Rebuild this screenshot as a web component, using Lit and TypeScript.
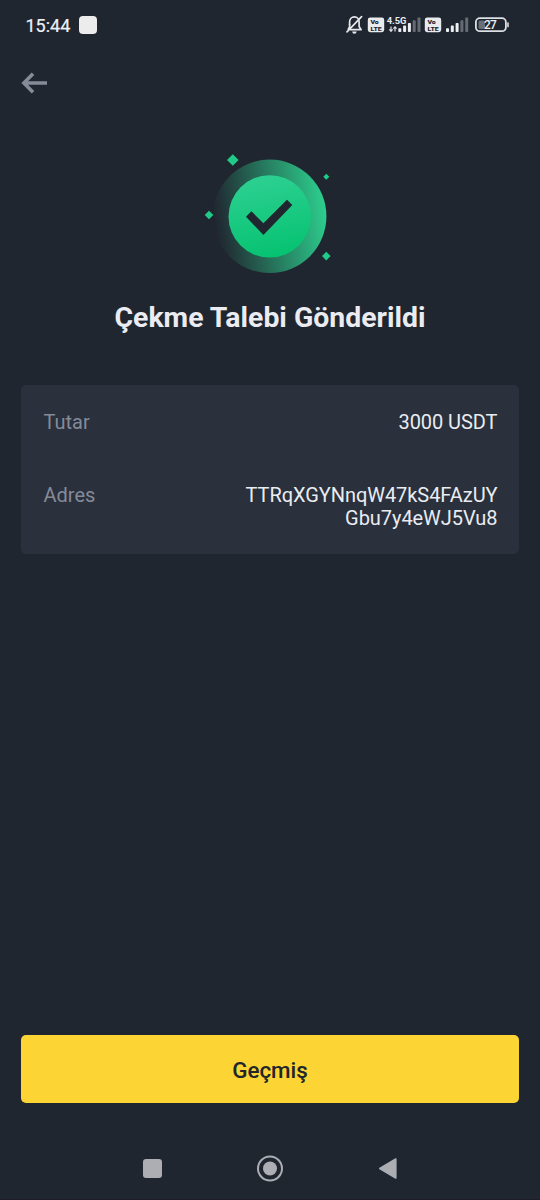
import { LitElement, html, css, svg } from "lit";
import { customElement, property } from "lit/decorators.js";

const bars = (x: number) =>
  [3.8, 6.4, 9, 11.8, 14.6].map(
    (h, i) => svg`<rect x=${x + i * 4.8} y=${32 - h - 9} width="3" height=${h} rx="0.8" fill=${i < 3 ? "#eceef2" : "#666b73"}></rect>`
  );

const volte = (x: number) => svg`
  <rect x=${x} y="8.6" width="16.4" height="14.6" rx="2.4" fill="#e9ebee"></rect>
  <text x=${x + 2.6} y="15" class="tiny dark" textLength="8.4" lengthAdjust="spacingAndGlyphs">Vo</text>
  <text x=${x + 2.6} y="22" class="tiny dark" textLength="11.4" lengthAdjust="spacingAndGlyphs">LTE</text>`;

@customElement("status-bar")
class StatusBar extends LitElement {
  static styles = css`
    :host { display: flex; height: 49px; box-sizing: border-box; padding: 9px 0 0 25.5px; align-items: flex-start; justify-content: space-between; }
    .left { display: flex; align-items: center; gap: 9px; height: 32px; }
    .time { font-size: 18px; font-weight: 400; -webkit-text-stroke: 0.2px #eef0f4; color: #eef0f4; line-height: 32px; width: 44.5px; white-space: nowrap; padding-top: 1px; }
    .app { width: 18px; height: 18px; border-radius: 4px; background: #ececec; }
    svg { display: block; }
    .tiny { font-size: 6.2px; font-weight: 900; }
    .dark { fill: #1f252e; }
    .net { font-size: 9px; font-weight: 700; fill: #eceef2; }
    .level { font-size: 12px; font-weight: 500; fill: #eef0f4; }
  `;
  render() {
    return html`
      <div class="left"><span class="time">15:44</span><span class="app"></span></div>
      <svg width="200" height="32" viewBox="340 0 200 32">
        <g fill="none" stroke="#e6e8ec" stroke-width="1.7" stroke-linecap="round" stroke-linejoin="round">
          <path d="M349.600 15.500v-2.600c0-3 2-5.100 4.800-5.100 2.700 0 4.700 2.100 4.700 5.100v4.600l2 3.200H350.500"></path>
          <path d="M348.300 20.200l1.300-2.200v-2.500M347 22.800L361.600 7.600"></path>
        </g>
        <path d="M352.200 22.600h4.400a2.200 2.200 0 0 1-4.400 0z" fill="#e6e8ec"></path>
        ${volte(367.8)}
        <text class="net" x="386.700" y="14.600" textLength="19.800" lengthAdjust="spacingAndGlyphs">4.5G</text>
        <path d="M391 17.400v4.600M389.300 20.400l1.700 1.900 1.700-1.900M395 22.600v-4.600M393.400 19.600l1.600-1.800 1.600 1.800" fill="none" stroke="#dfe1e5" stroke-width="1.200"></path>
        ${bars(398.3)}
        ${volte(424.8)}
        ${bars(446)}
        <rect x="475.900" y="9.200" width="30" height="13" rx="4" fill="none" stroke="#dcdfe3" stroke-width="1.800"></rect>
        <rect x="478.500" y="11.500" width="6.500" height="8.400" rx="1.500" fill="#6a6f77"></rect>
        <path d="M508 14v3.600" stroke="#dcdfe3" stroke-width="1.600" stroke-linecap="round"></path>
        <text class="level" x="484" y="20" textLength="12.800">27</text>
      </svg>`;
  }
}

@customElement("success-badge")
class SuccessBadge extends LitElement {
  static styles = css`:host { display: block; } svg { display: block; margin: 0 auto; }`;
  render() {
    return html`<svg width="140" height="130" viewBox="200 150 140 130">
      <defs>
        <linearGradient id="halo" x1="0" y1="0.570" x2="1" y2="0.430">
          <stop offset="0.020" stop-color="#2dc98a" stop-opacity="0"></stop>
          <stop offset="1" stop-color="#2dcf8e"></stop>
        </linearGradient>
        <linearGradient id="disc" x1="0.400" y1="0" x2="0.600" y2="1">
          <stop offset="0" stop-color="#2dd092"></stop>
          <stop offset="1" stop-color="#05c270"></stop>
        </linearGradient>
      </defs>
      <circle cx="269.700" cy="216.300" r="56.700" fill="url(#halo)"></circle>
      <circle cx="269.700" cy="216.400" r="41.200" fill="url(#disc)"></circle>
      <path d="M246 216.700l5.400-5.400 12 11.900L287 199.700l5.300 5.300-28.900 30z" fill="#1f262f"></path>
      <path fill="#1fcb87" d="M232.800 154.200l5.800 5.800-5.800 5.800-5.800-5.800zM209 210.700l4.300 4.300-4.300 4.300-4.300-4.300zM326.300 173.800l3 3-3 3-3-3zM326.300 251.800l4.300 4.300-4.300 4.300-4.300-4.300z"></path>
    </svg>`;
  }
}

@customElement("detail-row")
class DetailRow extends LitElement {
  @property() label = "";
  @property({ attribute: false }) lines: string[] = [];
  static styles = css`
    :host { display: flex; justify-content: space-between; font-size: 20px; line-height: 23.500px; }
    .label { color: #848b98; }
    .value { color: #e9ecf2; text-align: right; white-space: nowrap; letter-spacing: -0.06px; }
    .line { display: block; }
  `;
  render() {
    return html`<span class="label">${this.label}</span>
      <span class="value">${this.lines.map((l) => html`<span class="line">${l}</span>`)}</span>`;
  }
}

@customElement("app-root")
class AppRoot extends LitElement {
  static styles = css`
    :host { display: flex; flex-direction: column; height: 1200px; box-sizing: border-box; border-bottom: 1px solid #1f1c29; width: 100%; background: #202630; color: #eaecef; font-family: Roboto, sans-serif; }
    .header { height: 101px; box-sizing: border-box; padding: 22px 20px 0; }
    .header svg { display: block; }
    h1 { margin: 20px 0 0; font-size: 28.400px; line-height: 36px; font-weight: 700; text-align: center; color: #eaecf2; }
    .card { margin: 49px 21px 0; height: 169px; box-sizing: border-box; border-radius: 5px; background: #2a303c; padding: 25.500px 21.500px 0 22.500px; display: flex; flex-direction: column; gap: 49.500px; }
    .spacer { flex: 1; }
    button { margin: 0 21px; height: 68px; border: 0; border-radius: 5px; padding: 1px 0 0; background: #fcd535; color: #20262b; font: 500 22.400px/28px Roboto, sans-serif; }
    nav { height: 96px; }
    nav svg { display: block; }
  `;
  render() {
    return html`
      <status-bar></status-bar>
      <div class="header">
        <svg width="30" height="24" viewBox="20 71 30 24" fill="none" stroke="#848c98" stroke-width="3.600">
          <path d="M24 83H47M33 73.800L23.900 83L33 92.200"></path>
        </svg>
      </div>
      <success-badge></success-badge>
      <h1>Çekme Talebi Gönderildi</h1>
      <section class="card">
        <detail-row label="Tutar" .lines=${["3000 USDT"]}></detail-row>
        <detail-row label="Adres" .lines=${["TTRqXGYNnqW47kS4FAzUY", "Gbu7y4eWJ5Vu8"]}></detail-row>
      </section>
      <div class="spacer"></div>
      <button>Geçmiş</button>
      <nav>
        <svg width="540" height="96" viewBox="0 1103 540 96" fill="#acaeb3">
          <rect x="143" y="1159" width="19" height="19" rx="3"></rect>
          <circle cx="270" cy="1168.500" r="12" fill="none" stroke="#acaeb3" stroke-width="2"></circle>
          <circle cx="270" cy="1168.500" r="7"></circle>
          <path d="M379.800 1168.500L395.800 1159v19z" stroke="#acaeb3" stroke-width="1.600" stroke-linejoin="round"></path>
        </svg>
      </nav>`;
  }
}
